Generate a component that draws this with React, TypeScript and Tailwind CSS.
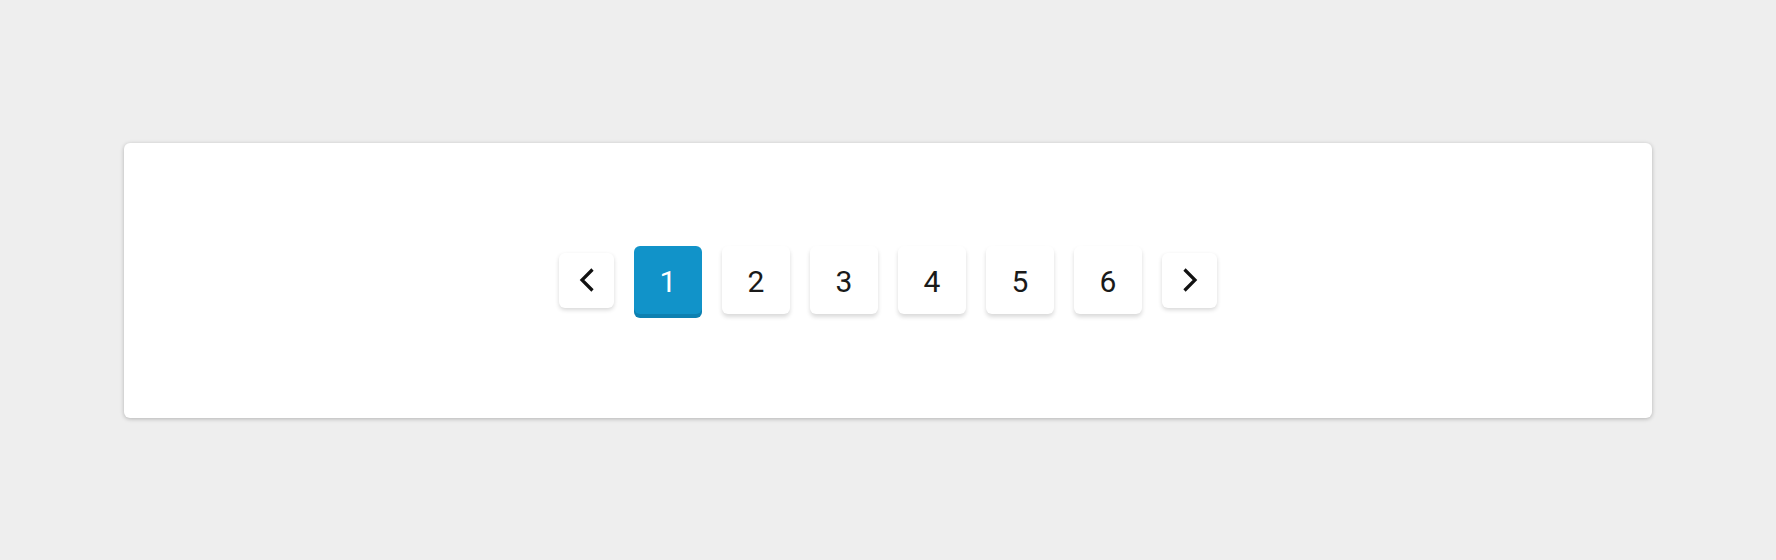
const pages = [1, 2, 3, 4, 5, 6]

function Chevron({ dir }: { dir: 'left' | 'right' }) {
  const points = dir === 'left' ? '13.5,1.5 3,12 13.5,22.5' : '2.5,1.5 13,12 2.5,22.5'
  return (
    <svg width="16" height="24" viewBox="0 0 16 24" fill="none">
      <polyline points={points} stroke="#111" strokeWidth="3.2" strokeLinecap="butt" strokeLinejoin="miter" />
    </svg>
  )
}

export default function App() {
  const active = 1

  return (
    <div className="flex h-[560px] items-center bg-[#eeeeee] px-[124px] font-['Roboto',sans-serif]">
      <div className="flex h-[275px] w-full items-center justify-center gap-5 rounded-md bg-white shadow-[0_1px_4px_rgba(0,0,0,0.25)]">
        <button className="flex h-[55px] w-[55px] items-center justify-center rounded-md bg-white shadow-[0_2px_4px_rgba(0,0,0,0.16)]">
          <Chevron dir="left" />
        </button>
        {pages.map((p) =>
          p === active ? (
            <button
              key={p}
              className="flex h-[68px] w-[68px] items-center justify-center rounded-md bg-[#1193c9] pt-0.5 text-[30px] text-white shadow-[0_4px_0_#0d80b1]"
            >
              {p}
            </button>
          ) : (
            <button
              key={p}
              className="flex h-[68px] w-[68px] items-center justify-center rounded-md bg-white pt-0.5 text-[30px] text-[#1a1a1a] shadow-[0_3px_4px_rgba(0,0,0,0.15)]"
            >
              {p}
            </button>
          )
        )}
        <button className="flex h-[55px] w-[55px] items-center justify-center rounded-md bg-white shadow-[0_2px_4px_rgba(0,0,0,0.16)]">
          <Chevron dir="right" />
        </button>
      </div>
    </div>
  )
}
